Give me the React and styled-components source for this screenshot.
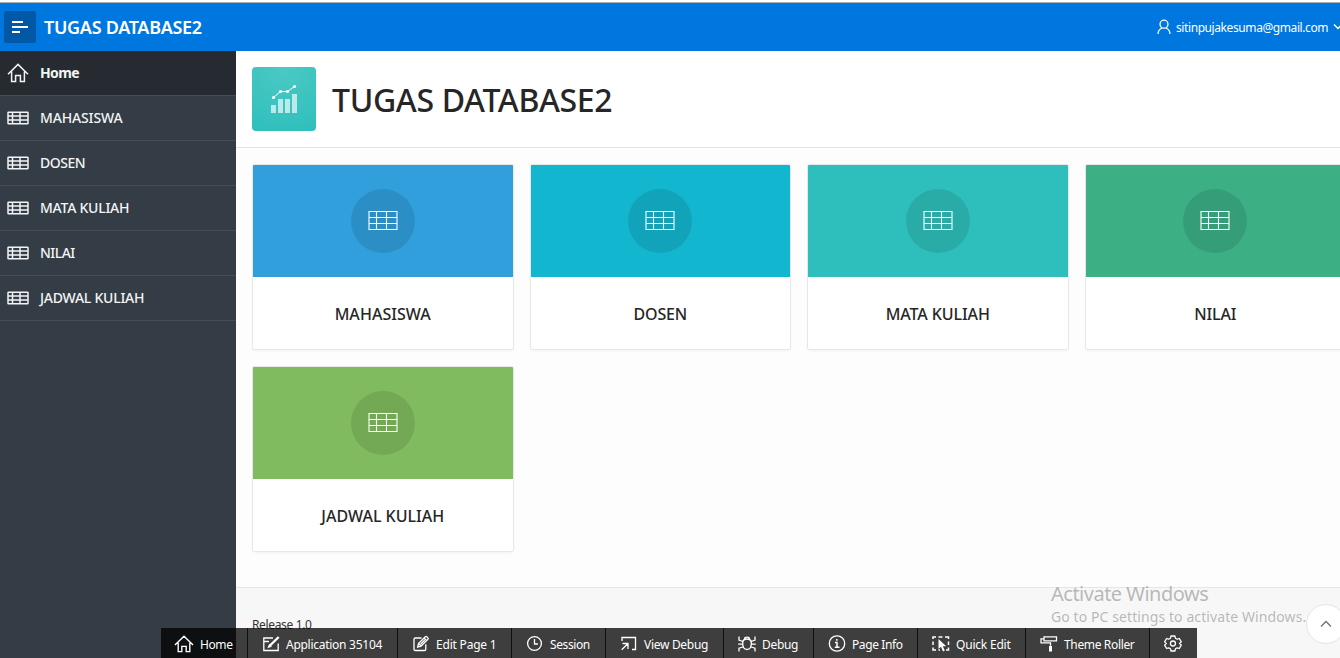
import React from "react";
import styled, { createGlobalStyle } from "styled-components";

const Global = createGlobalStyle`
  *, *::before, *::after { box-sizing: border-box; }
  html, body { margin: 0; height: 658px; overflow: hidden; background: #fff; }
  body { font-family: "Noto Sans", "Open Sans", sans-serif; font-size: 14px; color: #262626; }
  svg { display: block; flex: none; }
`;

const Page = styled.div`
  display: flex;
  flex-direction: column;
  width: 1340px;
  height: 658px;
  overflow: hidden;
  position: relative;
`;

const TopEdge = styled.div`
  flex: none;
  height: 3px;
  background: #fff;
  border-bottom: 1px solid #a9b0b8;
`;

const Header = styled.header`
  flex: none;
  display: flex;
  align-items: center;
  height: 48px;
  padding-left: 4px;
  background: #0076df;
  color: #fff;
`;

const MenuButton = styled.button`
  display: grid;
  place-items: center;
  width: 32px;
  height: 32px;
  padding: 0;
  border: 0;
  border-radius: 2px;
  background: #0058a7;
  color: #fff;
`;

const Text = styled.span`
  white-space: nowrap;
  letter-spacing: ${(p) => p.$track || 0}px;
`;

const Brand = styled(Text)`
  margin-left: 8px;
  font-size: 18px;
  font-weight: 600;
  line-height: 24px;
`;

const Account = styled.div`
  display: flex;
  align-items: center;
  width: 183px;
  margin-left: auto;
  font-size: 12px;
  flex: none;
  overflow: hidden;
  & > span { flex: none; margin-left: 5px; width: 153px; }
  & > svg:last-child { margin-left: 4px; }
`;

const Body = styled.div`
  flex: 1;
  display: flex;
  min-height: 0;
`;

const Sidebar = styled.nav`
  flex: none;
  width: 236px;
  background: #343d46;
`;

const NavItem = styled.a`
  display: flex;
  align-items: center;
  height: 45px;
  padding-left: 7px;
  border-bottom: 1px solid #444d56;
  background: ${(p) => (p.$active ? "#252b31" : "transparent")};
  color: #f2f4f5;
  font-size: 14px;
  font-weight: ${(p) => (p.$active ? 700 : 500)};
  & > span { margin: 0 0 2px 11px; }
`;

const Main = styled.main`
  flex: 1;
  min-width: 0;
  display: flex;
  flex-direction: column;
  background: #fdfdfd;
  overflow: hidden;
`;

const Hero = styled.section`
  flex: none;
  display: flex;
  align-items: center;
  height: 97px;
  padding-left: 16px;
  border-bottom: 1px solid #e4e4e4;
  background: #fff;
`;

const AppIcon = styled.div`
  width: 64px;
  height: 64px;
  border-radius: 4px;
  background: radial-gradient(circle at 50% 0%, #4cc9c4, #2ebfbc);
`;

const Title = styled.h1`
  margin: 2px 0 0 16px;
  font-size: 32px;
  font-weight: 500;
  line-height: 44px;
  white-space: nowrap;
  letter-spacing: -0.35px;
`;

const Cards = styled.section`
  flex: none;
  display: grid;
  grid-template-columns: repeat(4, 261.5px);
  grid-auto-rows: 186px;
  gap: 16px;
  height: 439px;
  padding: 16px;
`;

const Card = styled.article`
  display: flex;
  flex-direction: column;
  border: 1px solid #e8e8e8;
  border-radius: 2px;
  background: #fff;
  box-shadow: 0 2px 4px -2px rgba(0, 0, 0, 0.08);
  overflow: hidden;
`;

const CardTop = styled.div`
  display: grid;
  place-items: center;
  height: 112px;
  background: ${(p) => p.$color};
  color: #fff;
`;

const Disc = styled.div`
  display: grid;
  place-items: center;
  width: 64px;
  height: 64px;
  border-radius: 50%;
  background: rgba(0, 0, 0, 0.1);
`;

const CardLabel = styled.div`
  flex: 1;
  display: grid;
  place-items: center;
  padding-top: 1px;
  font-size: 16px;
  font-weight: 500;
  line-height: 24px;
  color: #262626;
`;

const Footer = styled.footer`
  flex: 1;
  padding: 28px 16px 0;
  border-top: 1px solid #e6e6e6;
  background: #f7f7f7;
  font-size: 12px;
  line-height: 18px;
  color: #333;
`;

const DevBar = styled.div`
  position: absolute;
  left: 161px;
  bottom: 0;
  display: flex;
  height: 30px;
  background: rgba(0, 0, 0, 0.75);
  color: #fff;
  font-size: 12px;
`;

const DevButton = styled.a`
  display: flex;
  align-items: center;
  width: ${(p) => p.$w}px;
  padding: 2px 0 0 13px;
  border-right: 1px solid ${(p) => (p.$last ? "transparent" : "#101010")};
  & > span { margin-left: ${(p) => p.$gap}px; }
`;

const Watermark = styled.div`
  position: absolute;
  left: 1051px;
  top: 581px;
  color: rgba(120, 120, 120, 0.5);
  font-size: 14px;
  line-height: 20px;
  & > div { white-space: nowrap; letter-spacing: 0.09px; }
  & > div:first-child { font-size: 20px; line-height: 26px; letter-spacing: -0.5px; }
`;

const ToTop = styled.button`
  position: absolute;
  left: 1306px;
  top: 604px;
  display: grid;
  place-items: center;
  width: 40px;
  height: 40px;
  padding: 0;
  border: 1px solid #e4e4e4;
  border-radius: 50%;
  background: #fff;
  color: #707070;
`;

const Icon = ({ w = 20, h = 20, sw = 1.3, children }) => (
  <svg width={w} height={h} viewBox={`0 0 ${w} ${h}`} fill="none" stroke="currentColor" strokeWidth={sw}>
    {children}
  </svg>
);

const HomeIcon = ({ size = 22 }) => (
  <svg width={size} height={size} viewBox="0 0 22 22" fill="none" stroke="currentColor" strokeWidth="1.5">
    <path d="M1 12.2 11 2.4l10 9.8M4.6 9.5v9.9h4v-5.8h4.8v5.8h4V9.5" />
  </svg>
);

const NavTable = () => (
  <Icon w={22} h={14} sw={1.5}>
    <rect x="1" y="1.2" width="20" height="11.6" rx=".6" />
    <path d="M5.5 1v12M13 1v12M1 5h20M1 9h20" />
  </Icon>
);

const CardTable = () => (
  <Icon w={30} h={20} sw={1.1}>
    <path d="M1 .5h28v18H1zM8.5.5v18M18.5.5v18M1 6.5h28M1 12.5h28" />
  </Icon>
);

const ChartIcon = () => (
  <svg width="64" height="64" viewBox="0 0 64 64" fill="#fff">
    <path fillOpacity=".65" d="M19 38h5v8h-5zM26 32h5v14h-5zM33 32h5v14h-5zM40 27h5v19h-5z" />
    <path d="m21.5 30.5 7-6h7l7-5" fill="none" stroke="#fff" />
    <circle cx="21.5" cy="30.5" r="1.6" />
    <circle cx="28.5" cy="24.5" r="1.6" />
    <circle cx="35.5" cy="24.5" r="1.6" />
    <circle cx="42.5" cy="19.5" r="1.6" />
  </svg>
);

const icons = {
  home: <HomeIcon size={20} />,
  app: (
    <Icon>
      <path d="M12 4H2.8v12.5h14.4V9.5M3 7.5h5" />
      <path d="m8.5 12 9.2-9" strokeWidth="2.4" />
      <path d="m7.5 13.2 2.2-.7-1.3-1.3z" fill="currentColor" />
    </Icon>
  ),
  edit: (
    <Icon>
      <path d="M10.5 4H4.3q-1.3 0-1.3 1.3v9.9q0 1.3 1.3 1.3h9.2q1.3 0 1.3-1.3v-5" />
      <path d="m6.7 13 .8-3.5 6.8-6.8q.7-.7 1.4 0l1.2 1.2q.7.7 0 1.4l-6.8 6.8zM8 9.8l2 2M13 4l2.6 2.6M9.8 10l4-4" />
    </Icon>
  ),
  clock: (
    <Icon>
      <circle cx="9.5" cy="9.5" r="6.9" />
      <path d="M9.5 5v5H13" />
    </Icon>
  ),
  view: (
    <Icon>
      <path d="M3 7V3.5h13.5v12H13M3.5 9.5H9V15M9 9.5l-6.3 6.3" />
    </Icon>
  ),
  bug: (
    <Icon>
      <path d="M10 5q4 0 4.3 3.5.3 7-4.3 7t-4.3-7Q6 5 10 5zM7.5 5q0-1.8 2.5-1.8T12.5 5M2 2.5V6l3.8 1.5M18 2.5V6l-3.8 1.5M1.2 10.2h4.3M14.5 10.2h4.3M2 17.5v-3.3L5.8 13M18 17.5v-3.3L14.2 13" />
    </Icon>
  ),
  info: (
    <Icon>
      <circle cx="10" cy="9.5" r="7.7" />
      <path d="M8 8.5h2v4.8M7.8 13.3h4.7M9.8 5v1.8" strokeWidth="1.5" />
    </Icon>
  ),
  quick: (
    <Icon>
      <path d="M2 5V3h3M7.5 3h4M14 3h3.5v2M2 7.5v3.5M2 13.5V16h3M17.5 7.5V11M17.5 13.5V16H15M7.5 16H9" strokeWidth="1.5" />
      <path d="M7.5 5v10l2.5-2.2 2 4.6 1.8-.8-2-4.4h3.4z" fill="currentColor" stroke="none" />
    </Icon>
  ),
  roller: (
    <Icon>
      <path d="M5 2.8h12.5v4H5zM5 4.8H2v4h9.5v3" />
      <path d="M10 12h3v5.5h-3z" fill="currentColor" stroke="none" />
    </Icon>
  ),
  gear: (
    <Icon>
      <path d="m8 2-.5 2.2-1.8 1-2.1-.7-2 3.4 1.7 1.6-1.7 1.6 2 3.4 2.1-.7 1.8 1L8 17h3.9l.5-2.2 1.8-1 2.1.7 2-3.4-1.7-1.6 1.7-1.6-2-3.4-2.1.7-1.8-1L11.9 2z" strokeLinejoin="round" />
      <circle cx="9.95" cy="9.5" r="2.5" />
    </Icon>
  ),
};

const nav = [
  ["MAHASISWA", -0.15],
  ["DOSEN", -0.5],
  ["MATA KULIAH", -0.25],
  ["NILAI", -0.55],
  ["JADWAL KULIAH", -0.25],
];

const cards = [
  ["MAHASISWA", "#309fdb", 0.05],
  ["DOSEN", "#13b6cf", -0.2],
  ["MATA KULIAH", "#2ebfbc", -0.1],
  ["NILAI", "#3caf85", -0.2],
  ["JADWAL KULIAH", "#81bb5f", 0],
];

const tools = [
  { icon: "home", label: "Home", w: 87, gap: 6, track: -0.4 },
  { icon: "app", label: "Application 35104", w: 150, gap: 5, track: -0.27 },
  { icon: "edit", label: "Edit Page 1", w: 114, gap: 5, track: -0.2 },
  { icon: "clock", label: "Session", w: 94, gap: 5, track: -0.4 },
  { icon: "view", label: "View Debug", w: 118, gap: 5, track: -0.3 },
  { icon: "bug", label: "Debug", w: 90, gap: 5, track: -0.3 },
  { icon: "info", label: "Page Info", w: 104, gap: 5, track: -0.4 },
  { icon: "quick", label: "Quick Edit", w: 108, gap: 5, track: -0.2 },
  { icon: "roller", label: "Theme Roller", w: 124, gap: 5, track: -0.35 },
  { icon: "gear", w: 47 },
];

export default function App() {
  return (
    <>
      <Global />
      <Page>
        <TopEdge />
        <Header>
          <MenuButton aria-label="Menu">
            <Icon w={18} h={14} sw={2}>
              <path d="M1 2h11M1 7h16M1 12h8" />
            </Icon>
          </MenuButton>
          <Brand $track={-0.3}>TUGAS DATABASE2</Brand>
          <Account>
            <Icon w={14} h={16}>
              <circle cx="7" cy="5.2" r="4" />
              <path d="M1 15q.2-4.5 4.2-6M13 15q-.2-4.5-4.2-6" />
            </Icon>
            <Text $track={-0.41}>sitinpujakesuma@gmail.com</Text>
            <Icon w={10} h={8} sw={1.5}>
              <path d="m1 1.5 4 4 4-4" />
            </Icon>
          </Account>
        </Header>
        <Body>
          <Sidebar>
            <NavItem $active>
              <HomeIcon />
              <Text $track={-0.6}>Home</Text>
            </NavItem>
            {nav.map(([label, track]) => (
              <NavItem key={label}>
                <NavTable />
                <Text $track={track}>{label}</Text>
              </NavItem>
            ))}
          </Sidebar>
          <Main>
            <Hero>
              <AppIcon>
                <ChartIcon />
              </AppIcon>
              <Title>TUGAS DATABASE2</Title>
            </Hero>
            <Cards>
              {cards.map(([label, color, track]) => (
                <Card key={label}>
                  <CardTop $color={color}>
                    <Disc>
                      <CardTable />
                    </Disc>
                  </CardTop>
                  <CardLabel>
                    <Text $track={track}>{label}</Text>
                  </CardLabel>
                </Card>
              ))}
            </Cards>
            <Footer>
              <Text $track={-0.35}>Release 1.0</Text>
            </Footer>
          </Main>
        </Body>
        <Watermark>
          <div>Activate Windows</div>
          <div>Go to PC settings to activate Windows.</div>
        </Watermark>
        <ToTop aria-label="Back to top">
          <Icon w={12} h={8}>
            <path d="m1 6.5 5-5 5 5" />
          </Icon>
        </ToTop>
        <DevBar>
          {tools.map((t) => (
            <DevButton key={t.icon} $w={t.w} $gap={t.gap} $last={!t.label}>
              {icons[t.icon]}
              {t.label && <Text $track={t.track}>{t.label}</Text>}
            </DevButton>
          ))}
        </DevBar>
      </Page>
    </>
  );
}
